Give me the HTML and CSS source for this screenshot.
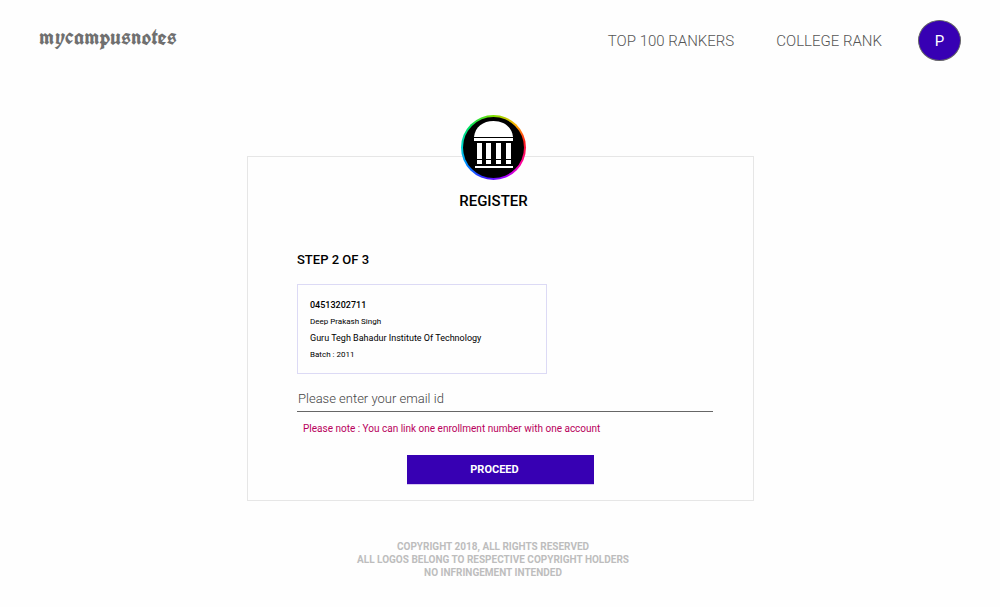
FILE: index.html
```html
<!DOCTYPE html>
<html lang="en">
<head>
<meta charset="utf-8">
<meta name="viewport" content="width=device-width, initial-scale=1">
<title>mycampusnotes - Register</title>
<link rel="stylesheet" href="styles.css">
</head>
<body>
<header class="header">
  <a class="brand" href="#">mycampusnotes</a>
  <nav class="nav">
    <a class="nav-link" href="#">TOP 100 RANKERS</a>
    <a class="nav-link" href="#">COLLEGE RANK</a>
    <button class="avatar" type="button">P</button>
  </nav>
</header>
<main class="main">
  <form class="card">
    <div class="card-head">
      <div class="emblem">
        <svg class="emblem-icon" viewBox="0 0 61 61" aria-hidden="true">
          <circle cx="30.500" cy="30.500" r="30.500" fill="#000"/>
          <g fill="#fff">
            <path d="M11 20C12 10 20 4 30.500 4S49 10 50 20Z"/>
            <path d="M11 21h39v3H11z"/>
            <path d="M14 26h5v16h-5zM23 26h5v16h-5zM33 26h5v16h-5zM43 26h5v16h-5z"/>
            <path d="M14 43h5v4h-5zM23 43h5v4h-5zM33 43h5v4h-5zM43 43h5v4h-5z"/>
            <path d="M12 49h38v2H12z"/>
          </g>
        </svg>
      </div>
      <h1 class="title">REGISTER</h1>
    </div>
    <h2 class="step">STEP 2 OF 3</h2>
    <section class="student">
      <strong>04513202711</strong>
      <span class="small">Deep Prakash Singh</span>
      <span>Guru Tegh Bahadur Institute Of Technology</span>
      <span class="small">Batch : 2011</span>
    </section>
    <input class="email" type="email" placeholder="Please enter your email id" aria-label="Please enter your email id">
    <p class="note">Please note : You can link one enrollment number with one account</p>
    <div class="actions">
      <button class="proceed" type="submit">PROCEED</button>
    </div>
  </form>
</main>
<footer class="footer">
  <div>COPYRIGHT 2018, ALL RIGHTS RESERVED</div>
  <div>ALL LOGOS BELONG TO RESPECTIVE COPYRIGHT HOLDERS</div>
  <div>NO INFRINGEMENT INTENDED</div>
</footer>
</body>
</html>
```
FILE: styles.css
```css
* {
  box-sizing: border-box;
}

body {
  margin: 0;
  background: #fefefe;
  color: #000;
  font-family: Roboto, "Liberation Sans", sans-serif;
}

.header {
  display: flex;
  justify-content: space-between;
  align-items: flex-start;
  padding: 20px 39px 0;
}

.brand {
  padding-top: 3px;
  color: #707070;
  font-family: "Old English Text MT", "UnifrakturCook", "Liberation Serif", serif;
  font-size: 23px;
  font-weight: bold;
  line-height: 26px;
  text-decoration: none;
}

.nav {
  display: flex;
  align-items: center;
}

.nav-link {
  margin-right: 42px;
  color: #555;
  font-size: 15px;
  font-weight: 300;
  text-decoration: none;
}

.nav-link + .nav-link {
  margin-right: 36px;
}

.avatar {
  width: 43px;
  height: 41px;
  padding: 0;
  border: 1px solid #666;
  border-radius: 50%;
  background: #3700b3;
  color: #fff;
  font: 15px Roboto, sans-serif;
}

.main {
  padding: 95px 24px 0 25px;
}

.card {
  max-width: 507px;
  margin: 0 auto;
  padding: 0 40px 16px 49px;
  border: 1px solid #e6e6e6;
}

.card-head {
  display: flex;
  flex-direction: column;
  align-items: center;
  margin-top: -42px;
  padding-right: 23px;
}

.emblem {
  width: 65px;
  height: 65px;
  padding: 2px;
  border-radius: 50%;
  background: conic-gradient(#7fe000, #ffb000 45deg, #ff1a1a 80deg, #ff00b0 125deg, #a000ff 160deg, #3a20ff 195deg, #0080ff 235deg, #00d8d8 270deg, #00e060 310deg, #7fe000);
}

.emblem-icon {
  display: block;
}

.title {
  margin: 11px 0 0;
  font-size: 15px;
  font-weight: 500;
  line-height: 20px;
}

.step {
  margin: 41px 0 0;
  font-size: 13px;
  font-weight: 500;
  line-height: 16px;
}

.student {
  display: flex;
  flex-direction: column;
  max-width: 250px;
  margin-top: 16px;
  padding: 12px 12px 10px;
  border: 1px solid #dcdaf5;
  font-size: 9px;
  line-height: 17px;
}

.student strong {
  font-weight: 500;
}

.small {
  font-size: 8px;
  line-height: 16px;
}

.email {
  display: block;
  width: 100%;
  height: 28px;
  margin-top: 10px;
  padding: 2px 1px 0;
  border: 0;
  border-bottom: 1px solid #666;
  background: transparent;
  font: 300 13px Roboto, sans-serif;
}

.email::placeholder {
  color: #444;
}

.note {
  margin: 9px 6px 0;
  color: #b8005c;
  font-size: 10px;
  line-height: 16px;
}

.actions {
  display: flex;
  justify-content: center;
  margin-top: 18px;
  padding-right: 9px;
}

.proceed {
  width: 45%;
  height: 29px;
  padding: 0 12px 0 0;
  border: 0;
  background: #3700b3;
  box-shadow: 0 1px 0 #d9c8f3;
  color: #fff;
  font: bold 11px Roboto, sans-serif;
}

.actions .proceed {
  width: 46%;
}

.footer {
  padding: 39px 14px 20px 0;
  color: #bdbdbd;
  font-size: 10px;
  font-weight: bold;
  line-height: 13px;
  text-align: center;
}
```
